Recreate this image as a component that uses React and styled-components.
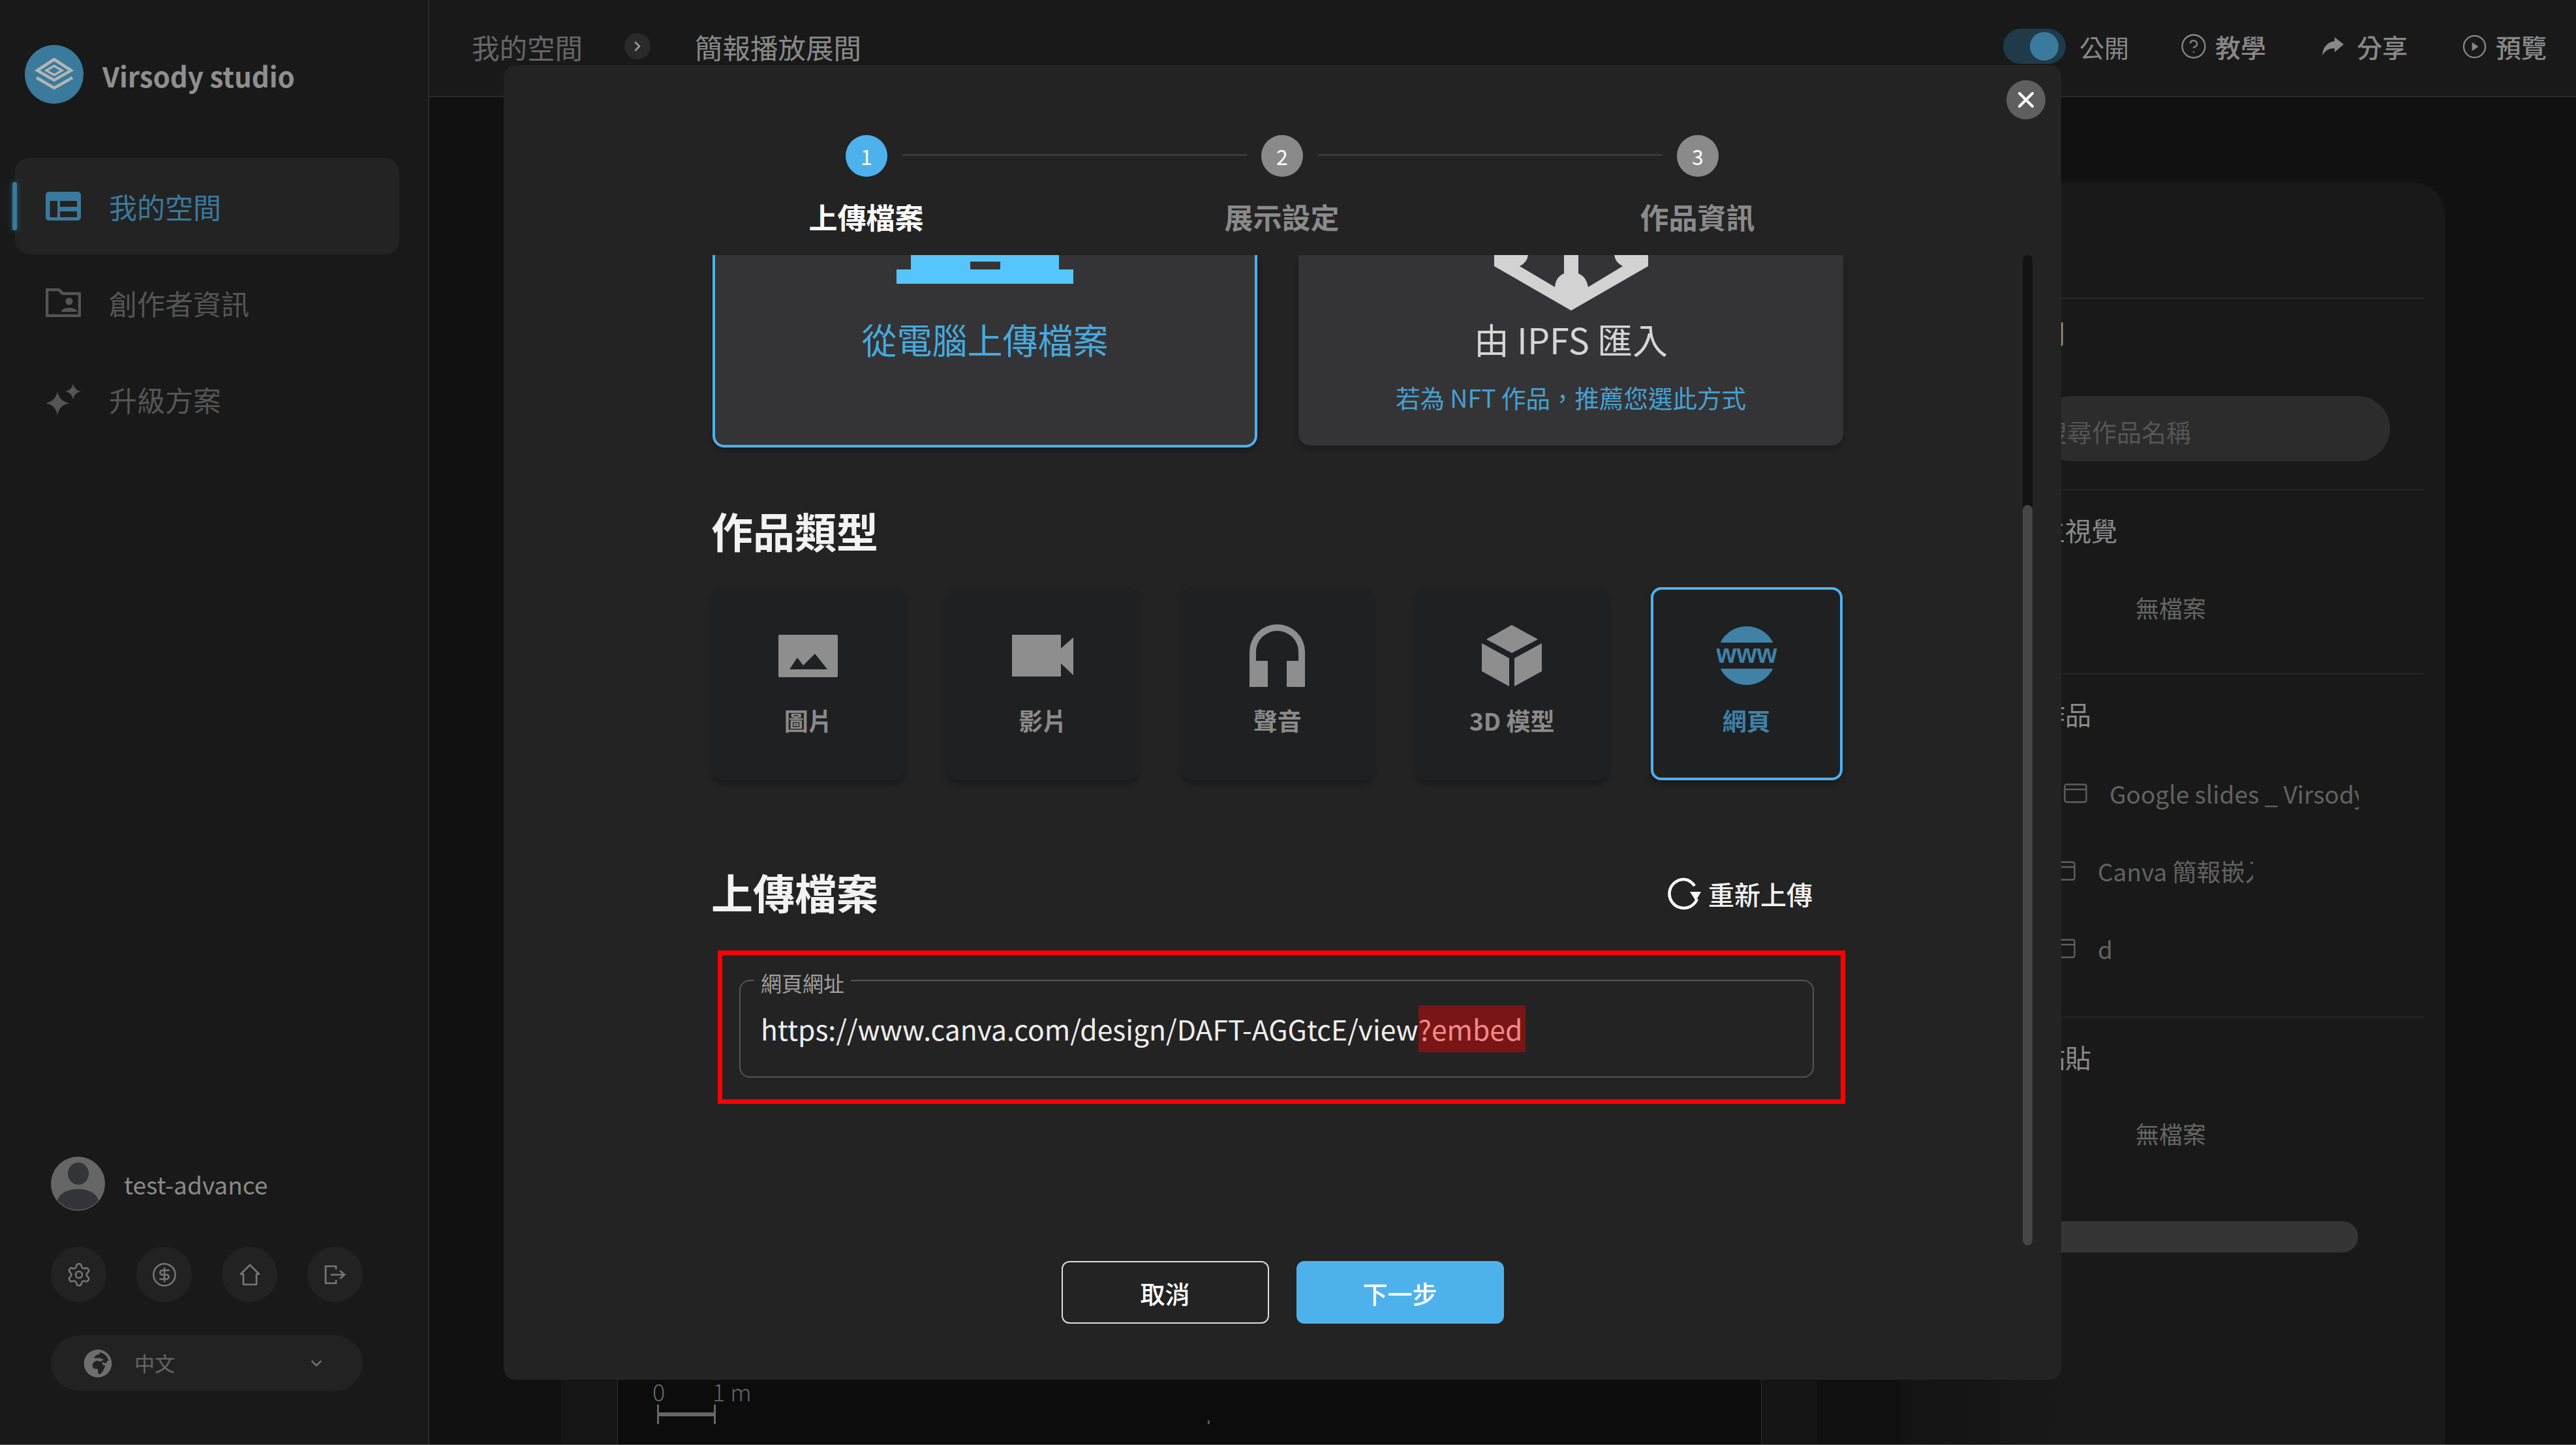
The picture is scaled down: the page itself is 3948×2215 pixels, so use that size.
import styled, { createGlobalStyle } from "styled-components";
import { CircleDollarSign, ChevronDown, ChevronRight, CircleHelp, Settings, X } from "lucide-react";
import { FaGlobeAfrica } from "react-icons/fa";

const GlobalStyle = createGlobalStyle`
  html, body {
    margin: 0;
    padding: 0;
    background: #5a5a5a;
    overflow: hidden;
  }
  * {
    box-sizing: border-box;
  }
  #root {
    width: 3948px;
    height: 2214px;
    font-family: "Noto Sans CJK TC", "Noto Sans", sans-serif;
  }
`;

// four point star with slightly fat arms
const Star = ({ x, y, r }) => {
  const c = r * 0.16;
  return (
    <path
      d={`M${x} ${y - r}Q${x + c} ${y - c} ${x + r} ${y}Q${x + c} ${y + c} ${x} ${y + r}Q${x - c} ${y + c} ${x - r} ${y}Q${x - c} ${y - c} ${x} ${y - r}Z`}
    />
  );
};

const navItems = [
  {
    label: "我的空間",
    active: true,
    icon: (
      <svg width="54" height="44" viewBox="0 0 54 44">
        <rect width="54" height="44" rx="5" fill="#3a7a9c" />
        <path d="M6.5 14H18V39H6.5ZM22 14H48V23H22ZM22 30H48V39H22Z" fill="#232323" />
      </svg>
    ),
  },
  {
    label: "創作者資訊",
    icon: (
      <svg width="54" height="44" viewBox="0 0 54 44" fill="none" stroke="#555" strokeWidth="4.5">
        <path d="M2 2H20L26 8H52V42H2Z" strokeLinejoin="round" />
        <circle cx="36" cy="20" r="5.5" fill="#555" stroke="none" />
        <path d="M24 36C24 28 48 28 48 36Z" fill="#555" stroke="none" />
      </svg>
    ),
  },
  {
    label: "升級方案",
    icon: (
      <svg width="54" height="54" viewBox="0 0 54 54" fill="#555">
        <Star x={18} y={33} r={18} />
        <Star x={42} y={15} r={12} />
      </svg>
    ),
  },
];

const typeItems = [
  {
    label: "圖片",
    icon: (
      <svg width="91" height="65" viewBox="0 0 91 65">
        <rect width="91" height="65" rx="2" fill="#8e8e8e" />
        <path d="M17 53L29 35L38 47L56 29L75 53Z" fill="#1f2022" />
      </svg>
    ),
  },
  {
    label: "影片",
    icon: (
      <svg width="94" height="64" viewBox="0 0 94 64" fill="#8e8e8e">
        <path d="M0 0H75V64H0ZM75 21L94 4V62L75 44Z" />
      </svg>
    ),
  },
  {
    label: "聲音",
    icon: (
      <svg width="85" height="96" viewBox="0 0 85 96" fill="#8e8e8e">
        <path d="M0 96V42A42.5 42 0 0 1 85 42V96H57V56H75V42A32.5 32 0 0 0 10 42V56H28V96Z" />
      </svg>
    ),
  },
  {
    label: "3D 模型",
    icon: (
      <svg width="92" height="94" viewBox="0 0 92 94" fill="#8e8e8e">
        <path d="M46 0L86 22L46 43L7 22ZM0 28L42 51V94L0 71ZM50 51L92 28V71L50 94Z" />
      </svg>
    ),
  },
  {
    label: "網頁",
    active: true,
    icon: (
      <svg width="92" height="92" viewBox="0 0 92 92" fill="#3f82a6">
        <path d="M5.7 26A45 45 0 0 1 86.3 26ZM5.7 66A45 45 0 0 0 86.3 66Z" />
        <text x="46" y="57" textAnchor="middle" fontFamily="Liberation Sans" fontWeight="700" fontSize="40">www</text>
      </svg>
    ),
  },
];

const panelFiles = [
  { name: "Google slides _ Virsody", indent: 38, width: 382 },
  { name: "Canva 簡報嵌入", indent: 20, width: 238 },
  { name: "d", indent: 20, width: 238 },
];

export default function App() {
  return (
    <>
      <GlobalStyle />
      <Page>
        <Sidebar>
          <Brand>
            <svg width="90" height="90" viewBox="0 0 90 90">
              <circle cx="45" cy="45" r="45" fill="#3a7a9c" />
              <g fill="none" stroke="#b5b5b5" strokeWidth="4.5">
                <path d="M45 22L71 39L45 54L19 39Z" />
                <path d="M45 32L57 39L45 46L33 39Z" strokeWidth="3.5" />
                <path d="M18 50L45 66L73 50" />
              </g>
            </svg>
            <BrandName>Virsody studio</BrandName>
          </Brand>
          <Nav>
            {navItems.map((item) => (
              <NavItem key={item.label} $active={item.active}>
                {item.active && <NavMarker />}
                <NavIcon>{item.icon}</NavIcon>
                {item.label}
              </NavItem>
            ))}
          </Nav>
          <SideFooter>
            <UserRow>
              <svg width="83" height="83" viewBox="0 0 83 83">
                <circle cx="41.5" cy="41.5" r="41.5" fill="#666" />
                <ellipse cx="42" cy="26" rx="16" ry="17" fill="#333537" />
                <path d="M10 67C16 44 67 44 73 67A41.5 41.5 0 0 1 10 67Z" fill="#333537" />
              </svg>
              <UserName>test-advance</UserName>
            </UserRow>
            <RoundRow>
              <RoundButton>
                <Settings size={40} strokeWidth={1.5} />
              </RoundButton>
              <RoundButton>
                <CircleDollarSign size={40} strokeWidth={1.5} />
              </RoundButton>
              <RoundButton>
                <svg width="34" height="34" viewBox="0 0 34 34" fill="none" stroke="currentColor" strokeWidth="2.6">
                  <path d="M17 2L31 16H27V32H7V16H3Z" strokeLinejoin="round" />
                </svg>
              </RoundButton>
              <RoundButton>
                <svg width="34" height="30" viewBox="0 0 34 30" fill="none" stroke="currentColor" strokeWidth="2.6">
                  <path d="M18 7V2H2V28H18V23M10 15H30M24 9L31 15L24 21" />
                </svg>
              </RoundButton>
            </RoundRow>
            <LangSelect>
              <FaGlobeAfrica size={44} />
              <LangText>中文</LangText>
              <ChevronDown size={26} strokeWidth={2.4} />
            </LangSelect>
          </SideFooter>
        </Sidebar>

        <Main>
          <Header>
            <Crumb>我的空間</Crumb>
            <CrumbArrow>
              <ChevronRight size={24} strokeWidth={2.6} />
            </CrumbArrow>
            <Crumb $current>簡報播放展間</Crumb>
            <HeaderRight>
              <Toggle>
                <ToggleKnob />
              </Toggle>
              <PublicLabel>公開</PublicLabel>
              <HeaderAction $gap={12} $left={78}>
                <CircleHelp size={42} strokeWidth={1.3} />
                教學
              </HeaderAction>
              <HeaderAction $gap={20} $left={86}>
                <svg width="33" height="28" viewBox="0 0 33 28" fill="currentColor">
                  <path d="M33 11L19 0V6C6 8 1 17 0 28C5 20 11 17 19 17V23Z" />
                </svg>
                分享
              </HeaderAction>
              <HeaderAction $gap={14} $left={84}>
                <svg width="37" height="37" viewBox="0 0 38 38" fill="none" stroke="currentColor" strokeWidth="2.4">
                  <circle cx="19" cy="19" r="17" />
                  <path d="M15 12L25 19L15 26Z" fill="currentColor" stroke="none" />
                </svg>
                預覽
              </HeaderAction>
            </HeaderRight>
          </Header>

          <Workspace>
            <Rail $width={202} $bg="#111111" />
            <Rail $width={86} $bg="#161616" />
            <Canvas>
              <ScaleLabel $left={53}>0</ScaleLabel>
              <ScaleLabel $left={145}>1 m</ScaleLabel>
              <ScaleBar />
              <CanvasDot />
            </Canvas>
            <Rail $width={85} $bg="#151515" />
            <Rail $width={127} $bg="#101010" />
            <PanelSlot>
              <Panel>
                <PanelTitle>列</PanelTitle>
                <SearchBox>搜尋作品名稱</SearchBox>
                <PanelLine $top={43} />
                <PanelHeading>主視覺</PanelHeading>
                <EmptyNote $top={59}>無檔案</EmptyNote>
                <PanelLine $top={71} />
                <PanelHeading>作品</PanelHeading>
                <FileList>
                  {panelFiles.map((file) => (
                    <FileRow key={file.name} $indent={file.indent}>
                      <svg width="36" height="30" viewBox="0 0 36 30" fill="none" stroke="#5f5f5f" strokeWidth="2.4">
                        <rect x="1.5" y="1.5" width="33" height="27" rx="3" />
                        <path d="M2 9H34" />
                      </svg>
                      <FileName $width={file.width}>{file.name}</FileName>
                    </FileRow>
                  ))}
                </FileList>
                <PanelLine $top={45} />
                <PanelHeading>黏貼</PanelHeading>
                <EmptyNote $top={57}>無檔案</EmptyNote>
                <PanelBar />
              </Panel>
            </PanelSlot>
          </Workspace>
        </Main>

        <Modal>
          <CloseButton>
            <X size={40} strokeWidth={2.4} />
          </CloseButton>
          <StepDots>
            <StepDot $active>1</StepDot>
            <StepLine />
            <StepDot>2</StepDot>
            <StepLine />
            <StepDot>3</StepDot>
          </StepDots>
          <StepLabels>
            <StepLabel $active>上傳檔案</StepLabel>
            <StepLabel>展示設定</StepLabel>
            <StepLabel>作品資訊</StepLabel>
          </StepLabels>

          <ScrollArea>
            <SourceRow>
              <SourceCard $active>
                <svg width="271" height="44" viewBox="0 0 271 44" fill="#56c5fb">
                  <path d="M22 0H249V22H271V44H0V22H22Z" />
                  <rect x="113" y="10" width="46" height="12" fill="#343436" />
                </svg>
                <SourceTitle $active>從電腦上傳檔案</SourceTitle>
              </SourceCard>
              <SourceCard>
                <svg width="236" height="85" viewBox="0 0 236 85" fill="#d2d2d2">
                  <path d="M0 0V17L118 85L236 17V0H184Q186 12 197 17L144 49Q142 34 129 28V0H107V28Q94 34 93 49L39 17Q50 12 52 0Z" />
                </svg>
                <SourceTitle>由 IPFS 匯入</SourceTitle>
                <SourceHint>若為 NFT 作品，推薦您選此方式</SourceHint>
              </SourceCard>
            </SourceRow>

            <SectionTitle $top={86}>作品類型</SectionTitle>
            <TypeRow>
              {typeItems.map((item) => (
                <TypeCard key={item.label} $active={item.active}>
                  <TypeIcon>{item.icon}</TypeIcon>
                  {item.label}
                </TypeCard>
              ))}
            </TypeRow>

            <UploadHead>
              <SectionTitle>上傳檔案</SectionTitle>
              <ReuploadButton>
                <svg width="52" height="50" viewBox="0 0 52 50" fill="none" stroke="#fff" strokeWidth="4.5">
                  <path d="M42 13A22 22 0 0 0 27 3A22 22 0 1 0 46 33" />
                  <path d="M35 22H52L44 36Z" fill="#fff" stroke="none" />
                </svg>
                重新上傳
              </ReuploadButton>
            </UploadHead>

            <RedBox>
              <UrlField>
                <UrlLegend>網頁網址</UrlLegend>
                <UrlValue>
                  https://www.canva.com/design/DAFT-AGGtcE/view<Marked>?embed</Marked>
                </UrlValue>
              </UrlField>
            </RedBox>

            <ScrollTrack>
              <ScrollThumb />
            </ScrollTrack>
          </ScrollArea>

          <Actions>
            <ActionButton>取消</ActionButton>
            <ActionButton $primary>下一步</ActionButton>
          </Actions>
        </Modal>
      </Page>
    </>
  );
}

const Page = styled.div`
  position: relative;
  display: flex;
  width: 100%;
  height: 100%;
  background: #111111;
  overflow: hidden;
`;

const Sidebar = styled.aside`
  display: flex;
  flex-direction: column;
  flex: 0 0 658px;
  padding: 69px 0 82px;
  background: #191919;
  border-right: 2px solid #2a2a2a;
`;

const Brand = styled.div`
  display: flex;
  align-items: center;
  gap: 29px;
  padding-left: 38px;
`;

const BrandName = styled.span`
  padding-top: 3px;
  font-size: 42px;
  font-weight: 700;
  color: #8f8f8f;
`;

const Nav = styled.nav`
  display: flex;
  flex-direction: column;
  margin: 83px 0 0 23px;
  width: 589px;
`;

const NavItem = styled.div`
  position: relative;
  display: flex;
  align-items: center;
  gap: 43px;
  height: 148px;
  padding-left: 47px;
  border-radius: 22px;
  font-size: 43px;
  background: ${(p) => (p.$active ? "#232323" : "transparent")};
  color: ${(p) => (p.$active ? "#3a7a9c" : "#555555")};
`;

const NavMarker = styled.span`
  position: absolute;
  left: -4px;
  top: 37px;
  width: 7px;
  height: 74px;
  border-radius: 3px;
  background: #3a7a9c;
  box-shadow: 0 0 8px #2a5a74;
`;

const NavIcon = styled.span`
  display: flex;
  justify-content: center;
  width: 54px;
`;

const SideFooter = styled.div`
  display: flex;
  flex-direction: column;
  margin-top: auto;
  padding-left: 78px;
`;

const UserRow = styled.div`
  display: flex;
  align-items: center;
  gap: 29px;
`;

const UserName = styled.span`
  font-size: 37px;
  color: #8a8a8a;
`;

const RoundRow = styled.div`
  display: flex;
  gap: 46px;
  margin-top: 55px;
`;

const RoundButton = styled.div`
  display: flex;
  align-items: center;
  justify-content: center;
  width: 85px;
  height: 85px;
  border-radius: 50%;
  background: #222222;
  color: #777777;
`;

const LangSelect = styled.div`
  display: flex;
  align-items: center;
  width: 478px;
  height: 85px;
  margin-top: 51px;
  padding: 0 58px 0 50px;
  border-radius: 43px;
  background: #222222;
  color: #6e6e6e;
  svg:last-child {
    margin-left: auto;
  }
`;

const LangText = styled.span`
  margin-left: 34px;
  padding-bottom: 3px;
  font-size: 31px;
  color: #666666;
`;

const Main = styled.main`
  display: flex;
  flex-direction: column;
  flex: 1;
  min-width: 0;
`;

const Header = styled.header`
  display: flex;
  align-items: center;
  flex: 0 0 149px;
  padding: 0 45px 5px 65px;
  background: #191919;
  border-bottom: 2px solid #2a2a2a;
`;

const Crumb = styled.span`
  font-size: 42.5px;
  color: ${(p) => (p.$current ? "#8a8a8a" : "#666666")};
`;

const CrumbArrow = styled.span`
  display: flex;
  align-items: center;
  justify-content: center;
  width: 40px;
  height: 40px;
  margin: 0 68px 0 64px;
  border-radius: 50%;
  background: #2a2a2a;
  color: #999999;
`;

const HeaderRight = styled.div`
  display: flex;
  align-items: center;
  margin-left: auto;
`;

const Toggle = styled.div`
  display: flex;
  align-items: center;
  justify-content: flex-end;
  width: 96px;
  height: 54px;
  padding-right: 11px;
  border-radius: 27px;
  background: #1f3a48;
`;

const ToggleKnob = styled.span`
  width: 44px;
  height: 44px;
  border-radius: 50%;
  background: #3a7a9c;
`;

const PublicLabel = styled.span`
  margin-left: 21px;
  font-size: 38px;
  color: #888888;
`;

const HeaderAction = styled.div`
  display: flex;
  align-items: center;
  gap: ${(p) => p.$gap}px;
  margin-left: ${(p) => p.$left}px;
  font-size: 39px;
  font-weight: 500;
  color: #888888;
`;

const Workspace = styled.div`
  display: flex;
  flex: 1;
  min-height: 0;
`;

const Rail = styled.div`
  flex: 0 0 ${(p) => p.$width}px;
  background: ${(p) => p.$bg};
`;

const Canvas = styled.div`
  position: relative;
  flex: 0 0 1754px;
  background: #0c0c0c;
  border-left: 1px solid #303030;
  border-right: 1px solid #303030;
`;

const ScaleLabel = styled.span`
  position: absolute;
  left: ${(p) => p.$left}px;
  bottom: 60px;
  font-size: 36px;
  font-weight: 300;
  line-height: 44px;
  color: #666666;
`;

const ScaleBar = styled.div`
  position: absolute;
  left: 60px;
  bottom: 31px;
  width: 90px;
  height: 30px;
  border-left: 3px solid #666666;
  border-right: 3px solid #666666;
  background: linear-gradient(#666666, #666666) center / 100% 6px no-repeat;
`;

const CanvasDot = styled.span`
  position: absolute;
  left: 904px;
  bottom: 31px;
  width: 3px;
  height: 6px;
  background: #555555;
`;

const PanelSlot = styled.div`
  flex: 0 0 835px;
  padding-top: 131px;
  background: #111111;
  margin-right: 202px;
`;

const Panel = styled.section`
  display: flex;
  flex-direction: column;
  height: 100%;
  padding-left: 213px;
  border-top-right-radius: 48px;
  background: linear-gradient(90deg, #131313, #191919 30%);
`;

const PanelTitle = styled.div`
  margin: 176px 32px 0 0;
  padding-top: 30px;
  height: 151px;
  font-size: 40px;
  line-height: 44px;
  color: #8a8a8a;
  border-top: 2px solid #2a2a2a;
`;

const SearchBox = styled.div`
  display: flex;
  align-items: center;
  width: 538px;
  height: 100px;
  padding: 6px 0 0 5px;
  border-radius: 50px;
  background: #2c2c2c;
  font-size: 38px;
  color: #555555;
`;

const PanelLine = styled.div`
  height: 2px;
  margin: ${(p) => p.$top}px 32px 0 0;
  background: #242424;
`;

const PanelHeading = styled.div`
  margin-top: 30px;
  font-size: 40px;
  line-height: 60px;
  color: #8a8a8a;
`;

const EmptyNote = styled.div`
  margin-top: ${(p) => p.$top}px;
  padding-left: 148px;
  font-size: 36px;
  line-height: 60px;
  color: #666666;
`;

const FileList = styled.div`
  display: flex;
  flex-direction: column;
  margin-top: 32px;
`;

const FileRow = styled.div`
  display: flex;
  align-items: center;
  gap: 34px;
  height: 119px;
  padding-left: ${(p) => p.$indent}px;
`;

// the long names are cut hard at the column edge, no ellipsis
const FileName = styled.span`
  width: ${(p) => p.$width}px;
  overflow: hidden;
  white-space: nowrap;
  font-size: 37px;
  color: #626262;
`;

const PanelBar = styled.div`
  width: 489px;
  height: 48px;
  margin-top: 105px;
  border-radius: 0 24px 24px 0;
  background: #353535;
`;

const Modal = styled.div`
  position: absolute;
  top: 100px;
  left: 772px;
  display: flex;
  flex-direction: column;
  width: 2387px;
  height: 2015px;
  border-radius: 18px;
  background: #232323;
`;

const CloseButton = styled.div`
  position: absolute;
  top: 23px;
  right: 24px;
  display: flex;
  align-items: center;
  justify-content: center;
  width: 60px;
  height: 60px;
  border-radius: 50%;
  background: #5f5f5f;
  color: #ffffff;
`;

const StepDots = styled.div`
  display: flex;
  align-items: center;
  margin-top: 107px;
  padding-left: 524px;
`;

const StepDot = styled.div`
  display: flex;
  align-items: center;
  justify-content: center;
  flex: 0 0 64px;
  height: 64px;
  border-radius: 50%;
  font-size: 32px;
  color: #ffffff;
  background: ${(p) => (p.$active ? "#4db2ec" : "#8a8a8a")};
`;

const StepLine = styled.div`
  flex: 0 0 528px;
  height: 3px;
  margin: 0 22.5px 3px;
  background: #3a3a3a;
`;

const StepLabels = styled.div`
  display: flex;
  margin-top: 31px;
  padding-left: 237px;
`;

const StepLabel = styled.div`
  width: 637px;
  text-align: center;
  font-size: 44px;
  font-weight: 700;
  line-height: 60px;
  color: ${(p) => (p.$active ? "#ffffff" : "#8a8a8a")};
`;

const ScrollArea = styled.div`
  position: relative;
  flex: 0 0 1518px;
  margin-top: 29px;
  padding-left: 320px;
  overflow: hidden;
`;

const ScrollTrack = styled.div`
  position: absolute;
  top: 0;
  right: 44px;
  width: 15px;
  height: 100%;
  border-radius: 8px;
  background: #131313;
`;

const ScrollThumb = styled.div`
  height: 1135px;
  margin-top: 383px;
  border-radius: 8px;
  background: #464646;
`;

const SourceRow = styled.div`
  display: flex;
  gap: 63px;
  width: 1733px;
`;

const SourceCard = styled.div`
  display: flex;
  flex-direction: column;
  align-items: center;
  flex: 0 0 835px;
  height: ${(p) => (p.$active ? 295 : 292)}px;
  border-radius: 0 0 18px 18px;
  background: #343436;
  border: ${(p) => (p.$active ? "4px solid #4db2ec" : "none")};
  border-top: none;
  box-shadow: 0 5px 8px rgba(0, 0, 0, 0.25);
  & > svg {
    flex: 0 0 auto;
  }
`;

const SourceTitle = styled.div`
  margin-top: ${(p) => (p.$active ? "49px" : "8px")};
  font-size: 54px;
  line-height: 72px;
  color: ${(p) => (p.$active ? "#47a9dd" : "#d5d5d5")};
`;

const SourceHint = styled.div`
  margin-top: 28px;
  font-size: 37.5px;
  line-height: 50px;
  color: #47a0d0;
`;

const SectionTitle = styled.h2`
  margin: ${(p) => p.$top || 0}px 0 0 -2px;
  font-size: 64px;
  font-weight: 700;
  line-height: 80px;
  color: #f2f2f2;
`;

const TypeRow = styled.div`
  display: flex;
  gap: 66px;
  margin-top: 48px;
`;

const TypeCard = styled.div`
  display: flex;
  flex-direction: column;
  align-items: center;
  flex: 0 0 293.5px;
  height: 296px;
  padding-top: 53px;
  border-radius: 16px;
  border: 4px solid ${(p) => (p.$active ? "#4db2ec" : "#1f2022")};
  background: #1f2022;
  box-shadow: 0 6px 10px rgba(0, 0, 0, 0.28);
  font-size: 37px;
  font-weight: 700;
  line-height: 50px;
  color: ${(p) => (p.$active ? "#3f82a6" : "#8a8a8a")};
`;

const TypeIcon = styled.div`
  display: flex;
  align-items: center;
  justify-content: center;
  height: 96px;
  margin-bottom: 26px;
`;

const UploadHead = styled.div`
  display: flex;
  align-items: center;
  justify-content: space-between;
  width: 1733px;
  margin-top: 130px;
  padding-right: 47px;
`;

const ReuploadButton = styled.div`
  display: flex;
  align-items: center;
  gap: 11px;
  padding-top: 8px;
  font-size: 40px;
  font-weight: 500;
  color: #f2f2f2;
`;

const RedBox = styled.div`
  width: 1728px;
  height: 235px;
  margin: 51px 0 0 8px;
  padding: 38px 41px 0 26px;
  border: 7px solid #ff0000;
`;

const UrlField = styled.div`
  position: relative;
  display: flex;
  align-items: center;
  height: 150px;
  padding-left: 31px;
  border: 2px solid #555555;
  border-radius: 16px;
`;

const UrlLegend = styled.span`
  position: absolute;
  top: -20px;
  left: 21px;
  padding: 0 10px;
  background: #232323;
  font-size: 32px;
  line-height: 44px;
  color: #a0a0a0;
`;

const UrlValue = styled.div`
  font-size: 42.6px;
  line-height: 76px;
  color: #eeeeee;
`;

const Marked = styled.span`
  display: inline-block;
  padding-right: 5px;
  line-height: 72px;
  background: #7a1515;
  color: #f08a8a;
`;

const Actions = styled.div`
  display: flex;
  justify-content: center;
  gap: 42px;
  margin-top: 24px;
`;

const ActionButton = styled.div`
  display: flex;
  align-items: center;
  justify-content: center;
  width: 318px;
  height: 96px;
  border-radius: 12px;
  font-size: 38px;
  font-weight: 500;
  color: #ffffff;
  background: ${(p) => (p.$primary ? "#4db2ec" : "transparent")};
  border: 2px solid ${(p) => (p.$primary ? "#4db2ec" : "#dddddd")};
`;
